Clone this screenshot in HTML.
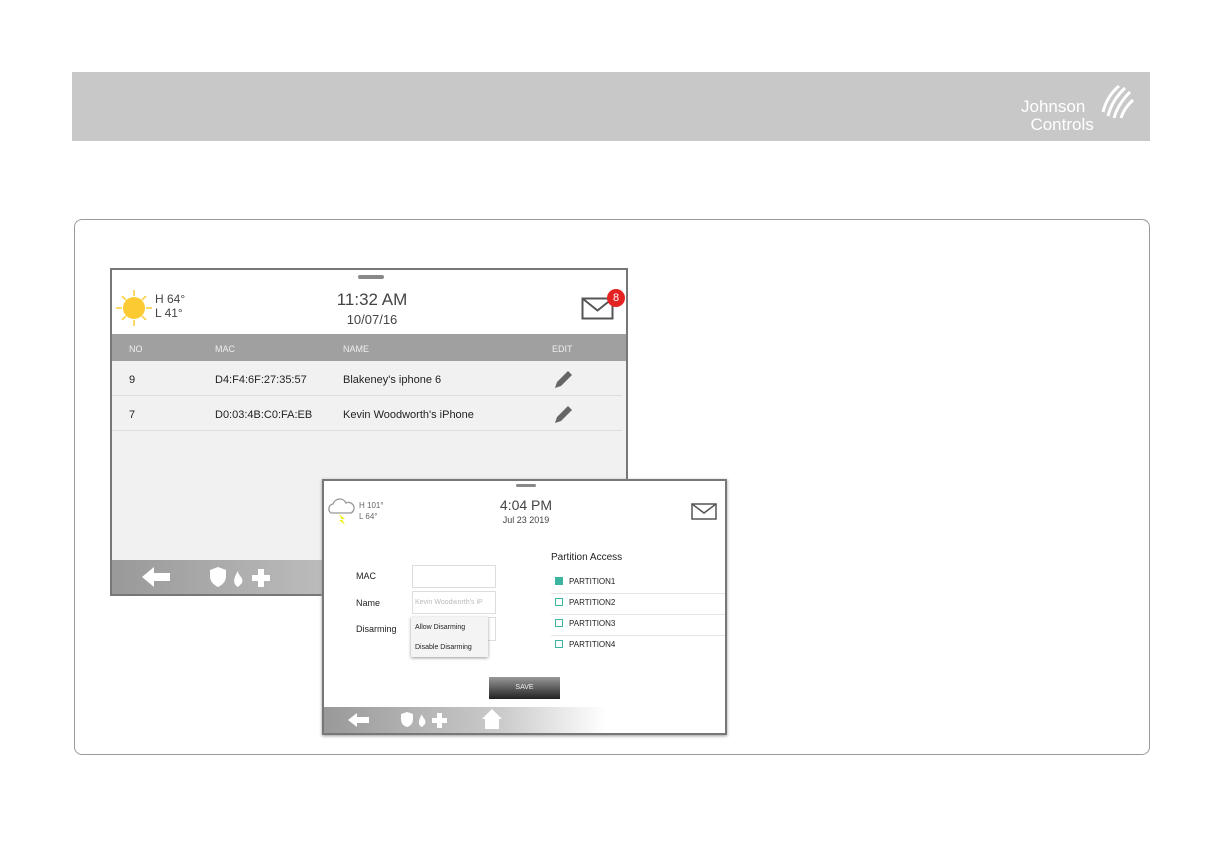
<!DOCTYPE html><html><head><style>
body{margin:0;width:1224px;height:864px;background:#fff;position:relative;font-family:"Liberation Sans",sans-serif;overflow:hidden}
.a{position:absolute}
</style></head><body>
<div class="a" style="left:72px;top:72px;width:1078px;height:69px;background:#c8c8c8"></div>
<div class="a" style="left:1021px;top:98px;color:#fff;font-size:17px;line-height:18px">Johnson<br>&nbsp;&nbsp;Controls</div>
<svg class="a" style="left:1097px;top:82px" width="40" height="40" viewBox="0 0 40 40"><g stroke="#fff" stroke-width="3" fill="none"><path d="M6 30 Q10 14 22 4"/><path d="M11 34 Q15 18 28 6"/><path d="M17 36 Q21 22 33 10"/><path d="M24 36 Q27 26 36 18"/></g></svg>
<div class="a" style="left:74px;top:219px;width:1074px;height:534px;border:1px solid #9a9a9a;border-radius:8px"></div>

<!-- screen 1 -->
<div class="a" style="left:110px;top:268px;width:514px;height:324px;border:2px solid #777;background:#f1f1f1;overflow:hidden">
 <div class="a" style="left:0;top:0;width:516px;height:64px;background:#fff"></div>
 <div class="a" style="left:246px;top:5px;width:26px;height:4px;border-radius:2px;background:#888"></div>
 <svg class="a" style="left:2px;top:14px" width="42" height="46" viewBox="0 0 42 46"><circle cx="20" cy="24" r="11" fill="#fccb33"/><g stroke="#fccb33" stroke-width="1.5"><path d="M20 6v6M20 36v6M2 24h6M32 24h6M8 12l4 4M32 12l-4 4M8 36l4-4M32 36l-4-4"/></g></svg>
 <div class="a" style="left:43px;top:22px;font-size:12px;line-height:14px;color:#444">H 64°<br>L 41°</div>
 <div class="a" style="left:200px;top:20px;width:120px;text-align:center;font-size:17px;color:#444">11:32 AM</div>
 <div class="a" style="left:200px;top:42px;width:120px;text-align:center;font-size:13px;color:#444">10/07/16</div>
 <svg class="a" style="left:469px;top:27px" width="34" height="24"><rect x="1.5" y="1.5" width="30" height="20" fill="none" stroke="#555" stroke-width="2"/><path d="M1.5 1.5l15 12 15-12" fill="none" stroke="#555" stroke-width="2"/></svg>
 <div class="a" style="left:495px;top:19px;width:18px;height:18px;border-radius:50%;background:#e52222;color:#fff;font-size:11px;text-align:center;line-height:18px">8</div>
 <div class="a" style="left:0;top:64px;width:516px;height:27px;background:#a0a0a0;color:#eee;font-size:9px"><span class="a" style="left:17px;top:10px">NO</span><span class="a" style="left:103px;top:10px">MAC</span><span class="a" style="left:231px;top:10px">NAME</span><span class="a" style="left:440px;top:10px">EDIT</span></div>
 <div class="a" style="left:0;top:91px;width:516px;height:70px;font-size:11px;color:#222">
  <div class="a" style="left:0;top:34px;width:510px;border-top:1px solid #ddd"></div>
  <div class="a" style="left:0;top:69px;width:510px;border-top:1px solid #ddd"></div>
  <span class="a" style="left:17px;top:13px">9</span><span class="a" style="left:103px;top:13px">D4:F4:6F:27:35:57</span><span class="a" style="left:231px;top:13px">Blakeney's iphone 6</span>
  <span class="a" style="left:17px;top:48px">7</span><span class="a" style="left:103px;top:48px">D0:03:4B:C0:FA:EB</span><span class="a" style="left:231px;top:48px">Kevin Woodworth's iPhone</span>
  <svg class="a" style="left:440px;top:7px" width="22" height="22"><path d="M3 20l2-6L16 3l4 4L9 18z" fill="#666"/></svg>
  <svg class="a" style="left:440px;top:42px" width="22" height="22"><path d="M3 20l2-6L16 3l4 4L9 18z" fill="#666"/></svg>
 </div>
 <div class="a" style="left:0;top:290px;width:516px;height:34px;background:linear-gradient(90deg,#999,#ccc 60%,#ddd)"></div>
 <svg class="a" style="left:30px;top:297px" width="30" height="20"><path d="M0 10L12 0v6h16v8H12v6z" fill="#fff"/></svg>
 <svg class="a" style="left:96px;top:297px" width="70" height="20"><path d="M2 3l8-3 8 3v6c0 6-4 9-8 11-4-2-8-5-8-11z" fill="#fff"/><path d="M30 20c-6-3-4-10 0-16 0 5 6 6 4 12z" fill="#fff"/><path d="M50 2h6v6h6v6h-6v6h-6v-6h-6V8h6z" fill="#fff"/></svg>
</div>

<!-- screen 2 -->
<div class="a" style="left:322px;top:479px;width:401px;height:252px;border:2px solid #777;background:#fff;overflow:hidden;box-shadow:0 1px 3px #999">
 <div class="a" style="left:192px;top:3px;width:20px;height:3px;border-radius:2px;background:#888"></div>
 <svg class="a" style="left:3px;top:14px" width="30" height="32"><path d="M4 18a5 5 0 0 1 2-9 7 7 0 0 1 13-1 5 5 0 0 1 5 10z" fill="none" stroke="#999" stroke-width="1.3"/><path d="M12 19l6 5-3 0 3 6-6-5 3 0z" fill="#ee2"/></svg>
 <div class="a" style="left:35px;top:19px;font-size:8px;line-height:11px;color:#666">H 101°<br>L 64°</div>
 <div class="a" style="left:150px;top:16px;width:104px;text-align:center;font-size:14px;color:#444">4:04 PM</div>
 <div class="a" style="left:150px;top:34px;width:104px;text-align:center;font-size:9px;color:#444">Jul 23 2019</div>
 <svg class="a" style="left:367px;top:22px" width="26" height="18"><rect x="1" y="1" width="24" height="15" fill="none" stroke="#555" stroke-width="1.5"/><path d="M1 1l12 9 12-9" fill="none" stroke="#555" stroke-width="1.5"/></svg>
 <div class="a" style="left:32px;top:90px;font-size:9px;color:#222">MAC</div>
 <div class="a" style="left:32px;top:117px;font-size:9px;color:#222">Name</div>
 <div class="a" style="left:32px;top:143px;font-size:9px;color:#222">Disarming</div>
 <div class="a" style="left:88px;top:84px;width:82px;height:21px;border:1px solid #ddd"></div>
 <div class="a" style="left:88px;top:110px;width:82px;height:21px;border:1px solid #ddd;font-size:7px;color:#bbb;line-height:21px;overflow:hidden;white-space:nowrap">&nbsp;Kevin Woodworth's iP</div>
 <div class="a" style="left:88px;top:136px;width:82px;height:22px;border:1px solid #ddd"></div>
 <div class="a" style="left:87px;top:136px;width:77px;height:40px;background:#f4f4f4;box-shadow:0 1px 3px #999;font-size:7px;color:#222"><span class="a" style="left:4px;top:7px">Allow Disarming</span><span class="a" style="left:4px;top:27px">Disable Disarming</span></div>
 <div class="a" style="left:227px;top:71px;font-size:10px;color:#222">Partition Access</div>
 <div class="a" style="left:227px;top:92px;width:176px;font-size:8px;color:#222">
  <div style="height:20px;border-bottom:1px solid #e6e6e6;position:relative"><span class="a" style="left:4px;top:4px;width:6px;height:6px;background:#3bb5a0;border:1px solid #3bb5a0"></span><span class="a" style="left:18px;top:4px">PARTITION1</span></div>
  <div style="height:20px;border-bottom:1px solid #e6e6e6;position:relative"><span class="a" style="left:4px;top:4px;width:6px;height:6px;border:1px solid #3bb5a0"></span><span class="a" style="left:18px;top:4px">PARTITION2</span></div>
  <div style="height:20px;border-bottom:1px solid #e6e6e6;position:relative"><span class="a" style="left:4px;top:4px;width:6px;height:6px;border:1px solid #3bb5a0"></span><span class="a" style="left:18px;top:4px">PARTITION3</span></div>
  <div style="height:20px;position:relative"><span class="a" style="left:4px;top:4px;width:6px;height:6px;border:1px solid #3bb5a0"></span><span class="a" style="left:18px;top:4px">PARTITION4</span></div>
 </div>
 <div class="a" style="left:165px;top:196px;width:71px;height:22px;background:linear-gradient(#999,#222);color:#eee;font-size:7px;text-align:center;line-height:22px">SAVE</div>
 <div class="a" style="left:0;top:226px;width:403px;height:26px;background:linear-gradient(90deg,#999,#ccc 45%,#fff 70%)"></div>
 <svg class="a" style="left:24px;top:232px" width="22" height="14"><path d="M0 7L9 0v4h12v6H9v4z" fill="#fff"/></svg>
 <svg class="a" style="left:76px;top:231px" width="60" height="16"><path d="M1 2l6-2 6 2v5c0 5-3 7-6 8-3-1-6-3-6-8z" fill="#fff"/><path d="M22 15c-5-2-3-8 0-13 0 4 5 5 3 10z" fill="#fff"/><path d="M37 1h5v5h5v5h-5v5h-5v-5h-5V6h5z" fill="#fff"/></svg>
 <svg class="a" style="left:157px;top:227px" width="22" height="22"><path d="M11 1L1 11h3v10h14V11h3z" fill="#fff"/></svg>
</div>
</body></html>
